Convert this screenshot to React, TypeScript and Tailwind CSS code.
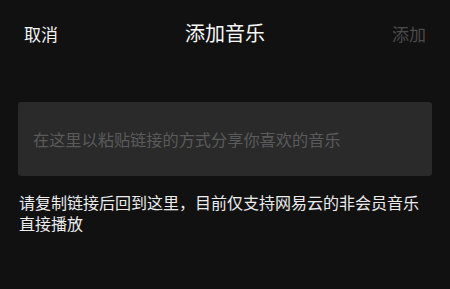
export default function App() {
  return (
    <div
      className="w-[450px] h-[289px] bg-[#111111] text-white overflow-hidden"
      style={{ fontFamily: '"Noto Sans CJK SC", "Noto Sans", sans-serif' }}
    >
      {/* Header */}
      <header className="h-[66px] px-6 flex items-center justify-between">
        <button className="text-[17px] leading-none text-[#f5f5f5]">取消</button>
        <h1 className="text-[20px] leading-none text-[#f8f8f8]">添加音乐</h1>
        <button className="text-[17px] leading-none text-[#4a4a4a]">添加</button>
      </header>

      <main className="px-[18px] pt-[36px]">
        <div className="h-[74px] rounded-[3px] bg-[#2a2a2a] px-[15px] flex items-center">
          <span className="text-[16.2px] leading-none text-[#5a5a5a]">
            在这里以粘贴链接的方式分享你喜欢的音乐
          </span>
        </div>
        <p className="mt-[16px] pl-px text-[16px] leading-[21px] text-[#ececec]">
          请复制链接后回到这里，目前仅支持网易云的非会员音乐直接播放
        </p>
      </main>
    </div>
  );
}
